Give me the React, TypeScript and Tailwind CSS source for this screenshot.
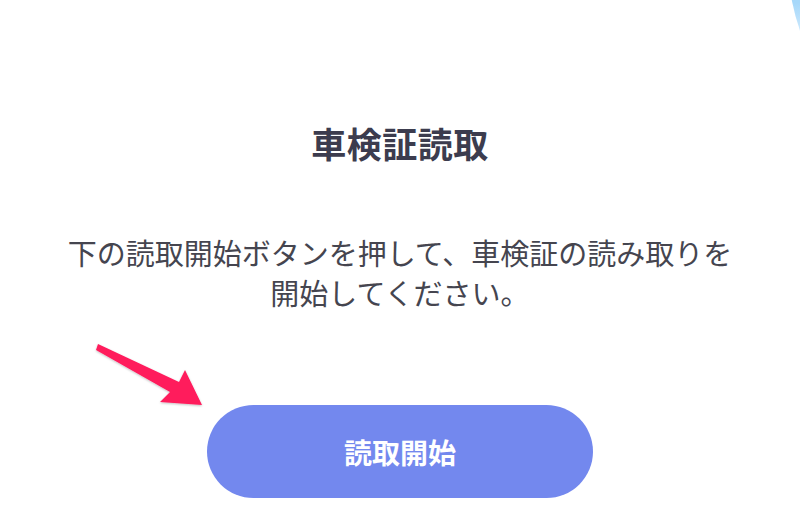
const font = {
  fontFamily: '"Noto Sans CJK JP", "Noto Sans", sans-serif',
};

function Arrow() {
  return (
    <svg
      className="absolute left-[92px] top-[340px]"
      width="120"
      height="75"
      viewBox="0 0 120 75"
    >
      <defs>
        <filter id="sh" x="-20%" y="-20%" width="140%" height="140%">
          <feDropShadow dx="0" dy="1" stdDeviation="1" floodColor="#000" floodOpacity="0.25" />
        </filter>
      </defs>
      <path
        d="M6 4 L4 10 L78 52 L68 62 L110 65 L93 30 L87 42 Z"
        fill="#ff1a5c"
        strokeLinejoin="round"
        filter="url(#sh)"
      />
    </svg>
  );
}

export default function App() {
  return (
    <div className="relative w-[800px] h-[518px] overflow-hidden bg-white" style={font}>
      {/* decorative blob peeking in from the top right */}
      <div className="absolute -right-[416px] -top-[254px] w-[428px] h-[428px] rounded-full bg-gradient-to-b from-[#a6d8fa] from-60% to-white to-76%" />
      <Arrow />
      <div className="flex flex-col items-center pt-[120px]">
        <h1 className="text-[35px] leading-[46px] font-bold text-[#3c3c4e] tracking-[0.5px]">
          車検証読取
        </h1>
        <p className="mt-[66px] text-center text-[29px] leading-[40px] text-[#45454f]">
          下の読取開始ボタンを押して、車検証の読み取りを
          <br />
          開始してください。
        </p>
        <button className="mt-[93px] w-[386px] h-[93px] rounded-full bg-[#7388ee] text-white text-[28px] font-bold">
          読取開始
        </button>
      </div>
    </div>
  );
}
